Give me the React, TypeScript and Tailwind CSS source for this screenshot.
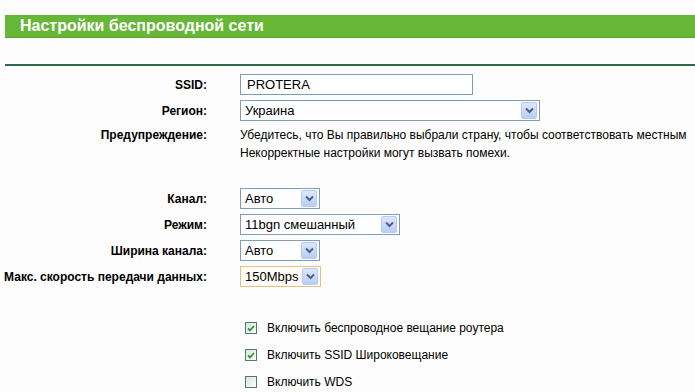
import React from "react"

function Arrow() {
  return (
    <span className="flex h-[17px] w-[16px] items-center justify-center rounded-[2px] border border-[#b6c9f0] bg-[linear-gradient(180deg,#dce7fc_0%,#b9cdf6_100%)]">
      <svg width="9" height="7" viewBox="0 0 9 7">
        <path d="M1 1.5 L4.5 5 L8 1.5" fill="none" stroke="#4d6185" strokeWidth="2" />
      </svg>
    </span>
  )
}

function Select({ value, width, focus }: { value: string; width: string; focus?: boolean }) {
  return (
    <div
      className={`flex h-[21px] items-center justify-between border pl-[4px] pr-[2px] ${width} ${
        focus ? "border-[#e3c185] bg-[#fffdf6]" : "border-[#7f9db9] bg-white"
      }`}
    >
      <span className="text-[13px] leading-none text-black">{value}</span>
      <Arrow />
    </div>
  )
}

function Row({ label, children }: { label: string; children: React.ReactNode }) {
  return (
    <div className="flex h-[21px] items-center">
      <div className="w-[207px] text-right text-[12px] font-bold text-black">{label}</div>
      <div className="ml-[33px]">{children}</div>
    </div>
  )
}

function Check({ checked, label }: { checked: boolean; label: string }) {
  return (
    <div className="flex h-[16px] items-center pl-[245px]">
      <span className="flex h-[12px] w-[12px] items-center justify-center border border-[#4e7b6b] bg-[linear-gradient(135deg,#dfe3e0_0%,#fbfbfb_100%)]">
        {checked && (
          <svg width="8" height="7" viewBox="0 0 8 7">
            <path d="M1 3.5 L3 5.5 L7 1" fill="none" stroke="#21a121" strokeWidth="1.8" />
          </svg>
        )}
      </span>
      <span className="ml-[10px] text-[12px] text-black">{label}</span>
    </div>
  )
}

export default function App() {
  return (
    <div className="min-h-screen w-[695px] overflow-hidden bg-[#fdfdfd] font-['Liberation_Sans',Arial,sans-serif]">
      <div className="pt-[15px] pl-[5px]">
        <div className="flex h-[23px] items-center border-b border-[#5da22e] bg-[#66b736] pl-[15px]">
          <span className="text-[16px] font-bold text-white">Настройки беспроводной сети</span>
        </div>
      </div>

      <div className="ml-[5px] mt-[26px] h-[2px] bg-[#2f6b48]" />

      <div className="mt-[8px] flex flex-col gap-[5px]">
        <Row label="SSID:">
          <div className="flex h-[21px] w-[233px] items-center border border-[#7f9db9] bg-white pl-[6px] text-[13px] text-black">
            PROTERA
          </div>
        </Row>
        <Row label="Регион:">
          <Select value="Украина" width="w-[300px]" />
        </Row>
        <div className="flex">
          <div className="w-[207px] text-right text-[12px] leading-[18px] font-bold text-black">
            Предупреждение:
          </div>
          <div className="ml-[33px] whitespace-nowrap text-[12px] leading-[18px] text-black">
            Убедитесь, что Вы правильно выбрали страну, чтобы соответствовать местным
            <br />
            Некорректные настройки могут вызвать помехи.
          </div>
        </div>
      </div>

      <div className="mt-[26px] flex flex-col gap-[5px]">
        <Row label="Канал:">
          <Select value="Авто" width="w-[80px]" />
        </Row>
        <Row label="Режим:">
          <Select value="11bgn смешанный" width="w-[160px]" />
        </Row>
        <Row label="Ширина канала:">
          <Select value="Авто" width="w-[80px]" />
        </Row>
        <Row label="Макс. скорость передачи данных:">
          <Select value="150Mbps" width="w-[81px]" focus />
        </Row>
      </div>

      <div className="mt-[33px] flex flex-col gap-[11px]">
        <Check checked label="Включить беспроводное вещание роутера" />
        <Check checked label="Включить SSID Широковещание" />
        <Check checked={false} label="Включить WDS" />
      </div>
    </div>
  )
}
